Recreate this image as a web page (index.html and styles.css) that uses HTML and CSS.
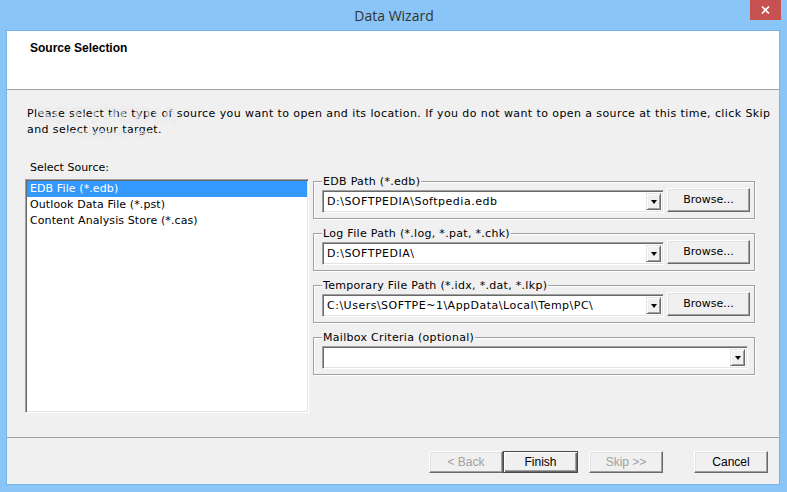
FILE: index.html
```html
<!DOCTYPE html>
<html lang="en">
<head>
  <meta charset="UTF-8">
  <title>Data Wizard</title>
  <link rel="stylesheet" href="styles.css">
</head>
<body>
  <div class="window">
    <div class="titlebar">
      <span class="title">Data Wizard</span>
      <div class="close">
        <svg width="9" height="8" viewBox="0 0 9 8"><path d="M1 0.5 L8 7.5 M8 0.5 L1 7.5" stroke="#fff" stroke-width="1.7" fill="none"/></svg>
      </div>
    </div>

    <div class="client">
      <div class="header">
        <h1>Source Selection</h1>
      </div>

      <div class="body">
        <p class="intro">Please select the type of source you want to open and its location. If you do not want to open a source at this time, click Skip<br>and select your target.</p>

        <div class="watermark">
          <span class="wm-big">SOFTPEDIA</span>
          <span class="wm-small">www.softpedia.com</span>
        </div>

        <div class="main">
          <div class="source-col">
            <div class="caption">Select Source:</div>
            <ul class="listbox">
              <li class="selected">EDB File (*.edb)</li>
              <li>Outlook Data File (*.pst)</li>
              <li>Content Analysis Store (*.cas)</li>
            </ul>
          </div>

          <div class="paths">
            <div class="group">
              <span class="group-label">EDB Path (*.edb)</span>
              <div class="combo"><span class="combo-text">D:\SOFTPEDIA\Softpedia.edb</span><span class="drop"><i></i></span></div>
              <div class="btn browse">Browse...</div>
            </div>
            <div class="group">
              <span class="group-label">Log File Path (*.log, *.pat, *.chk)</span>
              <div class="combo"><span class="combo-text">D:\SOFTPEDIA\</span><span class="drop"><i></i></span></div>
              <div class="btn browse">Browse...</div>
            </div>
            <div class="group">
              <span class="group-label">Temporary File Path (*.idx, *.dat, *.lkp)</span>
              <div class="combo"><span class="combo-text">C:\Users\SOFTPE~1\AppData\Local\Temp\PC\</span><span class="drop"><i></i></span></div>
              <div class="btn browse">Browse...</div>
            </div>
            <div class="group wide">
              <span class="group-label">Mailbox Criteria (optional)</span>
              <div class="combo"><span class="combo-text"></span><span class="drop"><i></i></span></div>
            </div>
          </div>
        </div>
      </div>

      <div class="footer">
        <div class="btn disabled">&lt; Back</div>
        <div class="btn default">Finish</div>
        <div class="btn disabled skip">Skip &gt;&gt;</div>
        <div class="btn cancel">Cancel</div>
      </div>
    </div>
  </div>
</body>
</html>
```

FILE: styles.css
```css
body {
  margin: 0;
  padding: 0;
  background-color: #8ac5f7;
  font-family: "Liberation Sans", Arial, sans-serif;
  font-size: 12px;
  color: #000;
  overflow: hidden;
}

.window {
  width: 787px;
  height: 492px;
  display: flex;
  flex-direction: column;
}

.titlebar {
  position: relative;
  height: 31px;
  flex: none;
  display: flex;
  justify-content: center;
  align-items: center;
}

.title {
  font-family: "Open Sans", "Noto Sans", sans-serif;
  font-size: 14px;
  color: #333;
  margin-top: -1px;
  margin-left: 1px;
}

.close {
  position: absolute;
  top: 0;
  right: 6px;
  width: 31px;
  height: 20px;
  background-color: #c75050;
  display: flex;
  justify-content: center;
  align-items: center;
}

.client {
  flex: 1;
  margin: 0 8px 8px 7px;
  background-color: #f0f0f0;
  display: flex;
  flex-direction: column;
  box-shadow: 0 0 0 1px #78b4e6;
}

.header {
  height: 59px;
  box-sizing: border-box;
  background-color: #fff;
  border-bottom: 1px solid #a0a0a0;
  padding: 10px 0 0 23px;
}

.header h1 {
  margin: 0;
  font-size: 12px;
  font-weight: bold;
  line-height: 14px;
}

/* tahoma-like text of the dialog body */
.intro,
.caption,
.listbox,
.group-label,
.combo-text,
.browse {
  font-family: "DejaVu Sans", Verdana, sans-serif;
  font-size: 11px;
}

.body {
  position: relative;
  height: 347px;
  padding: 16px 0 0 20px;
  box-sizing: border-box;
}

.intro {
  margin: 0;
  line-height: 16px;
  white-space: nowrap;
  letter-spacing: 0.41px;
  color: #000;
}

/* faint softpedia stamp over the intro text */
.watermark {
  position: absolute;
  left: 30px;
  top: 14px;
  display: flex;
  flex-direction: column;
  align-items: center;
  pointer-events: none;
}

.wm-big {
  font-family: "DejaVu Sans", sans-serif;
  font-size: 21px;
  font-weight: bold;
  letter-spacing: 1px;
  color: rgba(255, 255, 255, 0.5);
  text-shadow: 0 0 1px rgba(120, 120, 120, 0.18);
  line-height: 24px;
}

.wm-small {
  font-size: 10px;
  color: rgba(255, 255, 255, 0.75);
  text-shadow: 0 0 1px rgba(120, 120, 120, 0.25);
  line-height: 12px;
}

.main {
  display: flex;
  gap: 4px;
  margin: 20px 0 0 -2px;
}

.source-col {
  width: 284px;
}

.caption {
  line-height: 16px;
  padding: 2px 0 0 5px;
}

.listbox {
  list-style: none;
  margin: 3px 0 0 0;
  padding: 0;
  height: 234px;
  box-sizing: border-box;
  background-color: #fff;
  border: 1px solid;
  border-color: #a0a0a0 #fff #fff #a0a0a0;
  box-shadow: inset 1px 1px 0 #696969, inset -1px -1px 0 #e3e3e3;
  padding: 1px;
}

.listbox li {
  line-height: 16px;
  padding-left: 3px;
  letter-spacing: 0.1px;
}

.listbox li.selected {
  background-color: #3399ff;
  color: #fff;
}

.paths {
  width: 442px;
  padding-top: 23px;
}

.group {
  position: relative;
  height: 38px;
  box-sizing: border-box;
  border: 1px solid #a0a0a0;
  box-shadow: inset 1px 1px 0 #fff, 1px 1px 0 #fff;
  margin-bottom: 14px;
  padding: 0 4px 0 8px;
  display: flex;
  align-items: center;
  gap: 3px;
}

.group.wide {
  padding-right: 6px;
}

.group-label {
  position: absolute;
  top: -7px;
  left: 8px;
  padding: 0 1px;
  line-height: 14px;
  letter-spacing: 0.3px;
  background-color: #f0f0f0;
  white-space: nowrap;
}

.combo {
  flex: 1;
  height: 23px;
  margin-top: 2px;
  box-sizing: border-box;
  background-color: #fff;
  border: 1px solid;
  border-color: #a0a0a0 #fff #fff #a0a0a0;
  box-shadow: inset 1px 1px 0 #696969, inset -1px -1px 0 #e3e3e3;
  display: flex;
  align-items: center;
  padding: 2px 2px 2px 4px;
}

.combo-text {
  flex: 1;
  white-space: nowrap;
  overflow: hidden;
  letter-spacing: 0.5px;
}

.drop {
  width: 15px;
  height: 17px;
  box-sizing: border-box;
  background-color: #f0f0f0;
  border: 1px solid;
  border-color: #e3e3e3 #696969 #696969 #e3e3e3;
  box-shadow: inset 1px 1px 0 #fff, inset -1px -1px 0 #a0a0a0;
  display: flex;
  justify-content: center;
  align-items: center;
}

.drop i {
  width: 0;
  height: 0;
  border-left: 3.5px solid transparent;
  border-right: 3.5px solid transparent;
  border-top: 4px solid #000;
  margin-top: 2px;
}

.btn {
  height: 22px;
  box-sizing: border-box;
  background-color: #f0f0f0;
  border: 1px solid;
  border-color: #fff #696969 #696969 #fff;
  box-shadow: inset -1px -1px 0 #a0a0a0, inset 1px 1px 0 #e3e3e3;
  display: flex;
  justify-content: center;
  align-items: center;
  padding-bottom: 1px;
  width: 74px;
  flex: none;
}

.btn.browse {
  width: 83px;
  height: 24px;
}

.btn.disabled {
  color: #a0a0a0;
}

.btn.default {
  width: 75px;
  border: 1px solid #4a4a4a;
  box-shadow: inset 1px 1px 0 #fff, inset -1px -1px 0 #696969, inset -2px -2px 0 #a0a0a0;
}

.footer {
  flex: 1;
  border-top: 1px solid #a0a0a0;
  display: flex;
  justify-content: flex-end;
  align-items: flex-start;
  padding: 13px 11px 0 0;
}

.btn.skip {
  margin-left: 11px;
}

.btn.cancel {
  margin-left: 31px;
}
```
